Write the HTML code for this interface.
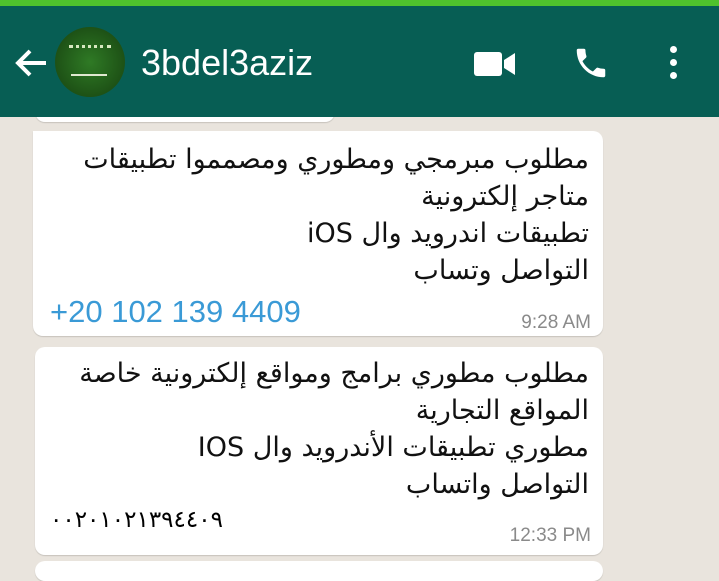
<!DOCTYPE html>
<html><head><meta charset="utf-8"><style>
body{margin:0;width:719px;height:564px;overflow:hidden;background:#e9e4dd;font-family:"Liberation Sans","Noto Sans CJK SC",sans-serif;position:relative}
.top{position:absolute;left:0;top:0;width:719px;height:6px;background:#4fc22d;z-index:3}
.hdr{position:absolute;left:0;top:6px;width:719px;height:111px;background:#075e54;z-index:2}
.name{position:absolute;left:141px;top:36px;color:#fff;font-size:36px}
.av{position:absolute;left:55px;top:21px;width:70px;height:70px;border-radius:50%;background:radial-gradient(circle,#2f7a25,#16400f)}
.b{position:absolute;background:#fff;border-radius:10px;box-shadow:0 1px 1px rgba(0,0,0,.15)}
.t{position:absolute;right:14px;direction:rtl;text-align:right;color:#111;font-size:27px;line-height:37px;font-family:"DejaVu Sans","Noto Sans CJK SC",sans-serif}
.tm{position:absolute;right:12px;color:#8a8a8a;font-size:19px}
</style></head><body>
<div class="top"></div>
<div class="hdr">
<svg style="position:absolute;left:14px;top:42px" width="34" height="30" viewBox="0 0 34 30"><path d="M32 15H4M16 3L4 15l12 12" stroke="#fff" stroke-width="4" fill="none"/></svg>
<div class="av"><div style="position:absolute;left:14px;top:18px;width:42px;height:10px;border-top:3px dotted #d8e8c0"></div><div style="position:absolute;left:16px;top:47px;width:36px;height:2px;background:#e0e8d0"></div></div>
<div class="name">3bdel3aziz</div>
<svg style="position:absolute;left:474px;top:45px" width="42" height="26" viewBox="0 0 42 26"><rect x="0" y="1" width="28" height="24" rx="3" fill="#fff"/><path d="M30 9l11-7v22l-11-7z" fill="#fff"/></svg>
<svg style="position:absolute;left:572px;top:38px" width="38" height="38" viewBox="0 0 24 24"><path fill="#fff" d="M6.6 10.8c1.4 2.8 3.8 5.1 6.6 6.6l2.2-2.2c.3-.3.7-.4 1-.2 1.1.4 2.3.6 3.6.6.6 0 1 .4 1 1V20c0 .6-.4 1-1 1C10.6 21 3 13.4 3 4c0-.6.4-1 1-1h3.5c.6 0 1 .4 1 1 0 1.2.2 2.4.6 3.6.1.3 0 .7-.2 1z"/></svg>
<div style="position:absolute;left:670px;top:40px;width:7px;height:7px;border-radius:50%;background:#fff;box-shadow:0 13px 0 #fff,0 26px 0 #fff"></div>
</div>
<div class="b" style="left:35px;top:100px;width:300px;height:22px"></div>
<div class="b" style="left:33px;top:131px;width:570px;height:205px;border-top-left-radius:0">
<div class="t" style="top:10px">مطلوب مبرمجي ومطوري ومصمموا تطبيقات<br>متاجر إلكترونية<br>تطبيقات اندرويد وال iOS<br>التواصل وتساب</div>
<div style="position:absolute;left:17px;top:163px;color:#3a9ad6;font-size:31px">+20 102 139 4409</div>
<div class="tm" style="top:181px">9:28 AM</div>
</div>
<div class="b" style="left:35px;top:347px;width:568px;height:208px">
<div class="t" style="top:8px">مطلوب مطوري برامج ومواقع إلكترونية خاصة<br>المواقع التجارية<br>مطوري تطبيقات الأندرويد وال IOS<br>التواصل واتساب</div>
<div style="position:absolute;left:15px;top:160px;font-size:23px;font-family:'DejaVu Sans',sans-serif">٠٠٢٠١٠٢١٣٩٤٤٠٩</div>
<div class="tm" style="top:178px">12:33 PM</div>
</div>
<div class="b" style="left:35px;top:561px;width:568px;height:20px"></div>
</body></html>
